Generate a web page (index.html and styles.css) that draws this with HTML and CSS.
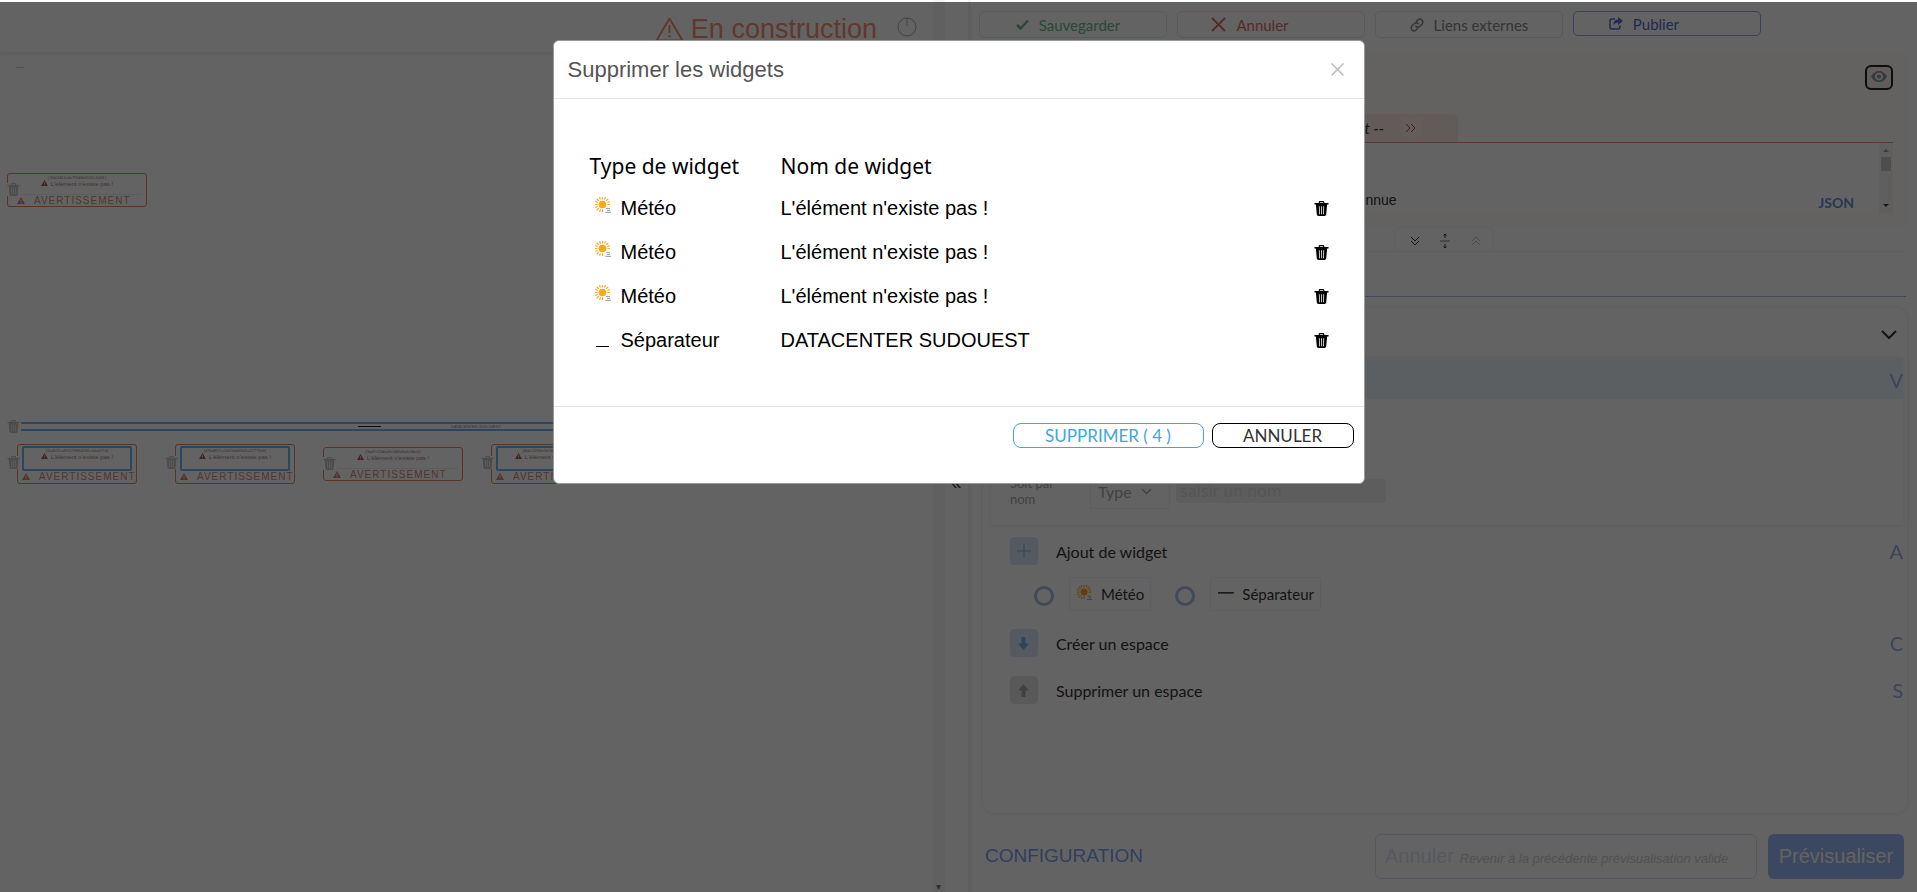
FILE: index.html
```html
<!DOCTYPE html>
<html lang="fr">
<head>
    <meta charset="utf-8" />
    <meta name="viewport" content="width=device-width, initial-scale=1.0" />
    <title>Supprimer les widgets</title>
    <link rel="stylesheet" href="styles.css">
</head>
<body>
    <!-- Shared icons -->
    <svg class="sprite" aria-hidden="true">
        <symbol id="trash" viewBox="0 0 16 16">
            <path fill-rule="evenodd" d="M5 2V1.200Q5 0 6.200 0h3.600Q11 0 11 1.200V2h4.500v1.600H14L13 14.500Q12.800 16 11.500 16h-7Q3.200 16 3 14.500L2 3.600H.5V2zM6.200 2h3.600V1.200H6.200zM5.200 5.500l.3 8.500h.8L6 5.500zm2.400 0V14h.8V5.500zm2.400 0L9.700 14h.8l.3-8.500z" />
        </symbol>
        <symbol id="warn" viewBox="0 0 16 14">
            <path fill-rule="evenodd" d="M8 0l8 14H0zM7 5v4h2V5zm0 5.500v2h2v-2z" />
        </symbol>
        <symbol id="sun" viewBox="0 0 18 18">
            <circle cx="7.500" cy="7.500" r="3.800" fill="#faa71b" />
            <path d="M7.500 0v2.500M7.500 12.500V15M0 7.500h2.500M12.500 7.500H15M1.800 1.800l2 2M11.200 3.800l2-2M1.800 13.200l2-2M4.500.3l1 2.300M10.500.3l-1 2.300M.3 4.500l2.300 1M.3 10.500l2.300-1M4.500 14.700l1-2.300M14.700 4.500l-2.300 1" stroke="#faa71b" stroke-width="1.200" fill="none" />
            <path d="M11 11h4v1.300h-4zM12 13h3v1h-3zM10.500 14.700H16V16h-5.500z" fill="#a9a9a9" />
        </symbol>
        <symbol id="dash" viewBox="0 0 14 14">
            <path d="M0 6.500h13" stroke="#000" fill="none" />
        </symbol>
    </svg>

    <div class="page">
        <main class="board">
            <header class="board-header">
                <h1>
                    <svg width="29" height="25" viewBox="0 0 29 25" fill="none" stroke="currentColor" stroke-width="2" stroke-linejoin="round"><path d="M14.500 1.500L27.500 23.500H1.500zM14.500 8v8M14.500 18v2.500" /></svg>
                    En construction
                </h1>
                <svg class="clock" width="20" height="20" viewBox="0 0 20 20" fill="none" stroke="currentColor"><circle cx="10" cy="10" r="9" /><path d="M10 1v8" /></svg>
            </header>
            <div class="canvas">
                <a class="crumb" href="#">----</a>

                <div class="widget wide">
                    <svg class="trash"><use href="#trash" /></svg>
                    <div class="content">
                        <small>[ 30b2d51a4e7f9d0b6532c1d08 ]</small>
                        <p><svg><use href="#warn" /></svg>L'élément n'existe pas !</p>
                    </div>
                    <div class="alert"><svg><use href="#warn" /></svg>AVERTISSEMENT</div>
                </div>

                <div class="separator">
                    <svg class="trash"><use href="#trash" /></svg>
                    <div class="line"><hr><span>DATACENTER SUDOUEST</span></div>
                </div>

                <div class="widgets">
                    <div class="widget selected">
                        <svg class="trash"><use href="#trash" /></svg>
                        <div class="content">
                            <small>[3ad535cd9147889d266cddad774]</small>
                            <p><svg><use href="#warn" /></svg>L'élément n'existe pas !</p>
                        </div>
                        <div class="alert"><svg><use href="#warn" /></svg>AVERTISSEMENT</div>
                    </div>
                    <div class="widget selected">
                        <svg class="trash"><use href="#trash" /></svg>
                        <div class="content">
                            <small>[d7bd867ca5d2ddd68d5a12776b8]</small>
                            <p><svg><use href="#warn" /></svg>L'élément n'existe pas !</p>
                        </div>
                        <div class="alert"><svg><use href="#warn" /></svg>AVERTISSEMENT</div>
                    </div>
                    <div class="widget wide">
                        <svg class="trash"><use href="#trash" /></svg>
                        <div class="content">
                            <small>[3ad7c55dad1c3d9a8a6c3ba5]</small>
                            <p><svg><use href="#warn" /></svg>L'élément n'existe pas !</p>
                        </div>
                        <div class="alert"><svg><use href="#warn" /></svg>AVERTISSEMENT</div>
                    </div>
                    <div class="widget selected">
                        <svg class="trash"><use href="#trash" /></svg>
                        <div class="content">
                            <small>[f6dc2436fe5b7dacca5d6c11c2]</small>
                            <p><svg><use href="#warn" /></svg>L'élément n'existe pas !</p>
                        </div>
                        <div class="alert"><svg><use href="#warn" /></svg>AVERTISSEMENT</div>
                    </div>
                </div>
            </div>
        </main>

        <div class="scroll"><span>▾</span></div>
        <div class="splitter"><span>«</span></div>

        <aside class="panel">
            <div class="toolbar">
                <button class="save"><svg width="13" height="11" viewBox="0 0 13 11" fill="none" stroke="currentColor" stroke-width="2.500"><path d="M1 6l3.500 3.500L12 1.500" /></svg>Sauvegarder</button>
                <button class="cancel"><svg width="15" height="15" viewBox="0 0 15 15" fill="none" stroke="currentColor" stroke-width="2"><path d="M1 1l13 13M14 1L1 14" /></svg>Annuler</button>
                <button class="links"><svg width="14" height="14" viewBox="0 0 24 24" fill="none" stroke="currentColor" stroke-width="2.500" stroke-linecap="round"><path d="M10 14a5 5 0 0 0 7 0l4-4a5 5 0 0 0-7-7l-3 3M14 10a5 5 0 0 0-7 0l-4 4a5 5 0 0 0 7 7l3-3" /></svg>Liens externes</button>
                <button class="publish"><svg width="14" height="13" viewBox="0 0 14 13"><path d="M6 2H3Q1 2 1 4v6q0 2 2 2h6q2 0 2-2V8.500" fill="none" stroke="currentColor" stroke-width="1.500" /><path d="M9 0l5 4-5 4V5.500Q6 5.500 4.500 8.500 4 3 9 2.500z" fill="currentColor" /></svg>Publier</button>
            </div>

            <section class="status">
                <button class="eye" aria-label="Afficher"><svg width="16" height="11" viewBox="0 0 16 11"><path fill-rule="evenodd" d="M0 5.500Q3 0 8 0t8 5.500Q13 11 8 11T0 5.500zM8 1.500a4 4 0 1 0 .01 0zM8 3.500a2 2 0 1 1-.01 0z" fill="currentColor" /></svg></button>
                <div class="status-tab"><i>Widget --</i><button aria-label="Suivant"><svg width="11" height="10" viewBox="0 0 11 10" fill="none" stroke="currentColor"><path d="M1 1l4 4-4 4M6 1l4 4-4 4" /></svg></button></div>
                <div class="status-body">
                    <span class="unknown">Inconnue</span>
                    <a href="#">JSON</a>
                    <div class="bar"><span class="up"></span><span class="thumb"></span><span class="down"></span></div>
                </div>
            </section>

            <div class="resize">
                <svg width="10" height="10" viewBox="0 0 10 10" fill="none" stroke="currentColor"><path d="M1 1l4 4 4-4M1 5l4 4 4-4" /></svg>
                <svg width="10" height="16" viewBox="0 0 10 16" fill="none" stroke="currentColor"><path d="M0 8h10" stroke="#777" /><path d="M5 1v4M3.500 2.500L5 1l1.500 1.500M5 15v-4M3.500 13.500L5 15l1.500-1.500" /></svg>
                <svg class="off" width="10" height="10" viewBox="0 0 10 10" fill="none" stroke="currentColor"><path d="M1 5l4-4 4 4M1 9l4-4 4 4" /></svg>
            </div>
            <div class="tabs"></div>

            <section class="config">
                <div class="config-head"><svg width="16" height="10" viewBox="0 0 16 10" fill="none" stroke="currentColor" stroke-width="2"><path d="M1 1l7 7 7-7" /></svg></div>
                <div class="config-group">
                    <div class="current"><a href="#">V</a></div>
                    <div class="search">
                        <label for="name">Soit par nom</label>
                        <div class="select">
                            <select aria-label="Type"><option>Type</option></select>
                            <svg width="11" height="7" viewBox="0 0 11 7" fill="none" stroke="currentColor" stroke-width="1.500"><path d="M1 1l4.500 4.500L10 1" /></svg>
                        </div>
                        <input id="name" type="text" placeholder="saisir un nom">
                    </div>
                </div>
                <div class="action">
                    <button class="tile" aria-label="Ajouter"><svg width="14" height="14" viewBox="0 0 14 14" stroke="currentColor"><path d="M7 0v14M0 7h14" /></svg></button>
                    <span>Ajout de widget</span>
                    <a href="#">A</a>
                </div>
                <div class="choices">
                    <input type="radio" name="kind" id="meteo">
                    <label for="meteo"><svg><use href="#sun" /></svg>Météo</label>
                    <input type="radio" name="kind" id="separateur">
                    <label for="separateur"><svg><use href="#dash" /></svg>Séparateur</label>
                </div>
                <div class="action">
                    <button class="tile down" aria-label="Créer"><svg width="11" height="13" viewBox="0 0 11 13" fill="currentColor"><path d="M3.500 0h4v6.500H11L5.500 13 0 6.500h3.500z" /></svg></button>
                    <span>Créer un espace</span>
                    <a href="#">C</a>
                </div>
                <div class="action">
                    <button class="tile up" aria-label="Supprimer"><svg width="11" height="13" viewBox="0 0 11 13" fill="currentColor"><path d="M3.500 13h4V6.500H11L5.500 0 0 6.500h3.500z" /></svg></button>
                    <span>Supprimer un espace</span>
                    <a href="#">S</a>
                </div>
            </section>

            <footer class="panel-footer">
                <span class="title">CONFIGURATION</span>
                <button class="undo">Annuler <i>Revenir à la précédente prévisualisation valide</i></button>
                <button class="preview">Prévisualiser</button>
            </footer>
        </aside>
    </div>

    <div class="backdrop">
        <div class="modal" role="dialog" aria-labelledby="modal-title">
            <div class="modal-header">
                <h2 id="modal-title">Supprimer les widgets</h2>
                <button class="close" aria-label="Fermer"><svg width="13" height="13" viewBox="0 0 13 13" fill="none" stroke="currentColor" stroke-width="1.500"><path d="M.5.5l12 12M12.500.5l-12 12" /></svg></button>
            </div>
            <div class="modal-body">
                <table>
                    <thead>
                        <tr><th>Type de widget</th><th>Nom de widget</th><th></th></tr>
                    </thead>
                    <tbody>
                        <tr>
                            <td><svg class="kind"><use href="#sun" /></svg>Météo</td>
                            <td>L'élément n'existe pas !</td>
                            <td><button aria-label="Supprimer"><svg><use href="#trash" /></svg></button></td>
                        </tr>
                        <tr>
                            <td><svg class="kind"><use href="#sun" /></svg>Météo</td>
                            <td>L'élément n'existe pas !</td>
                            <td><button aria-label="Supprimer"><svg><use href="#trash" /></svg></button></td>
                        </tr>
                        <tr>
                            <td><svg class="kind"><use href="#sun" /></svg>Météo</td>
                            <td>L'élément n'existe pas !</td>
                            <td><button aria-label="Supprimer"><svg><use href="#trash" /></svg></button></td>
                        </tr>
                        <tr>
                            <td><svg class="kind sep" viewBox="0 0 18 18"><path d="M1 14.500h13" stroke="#000" /></svg>Séparateur</td>
                            <td>DATACENTER SUDOUEST</td>
                            <td><button aria-label="Supprimer"><svg><use href="#trash" /></svg></button></td>
                        </tr>
                    </tbody>
                </table>
            </div>
            <div class="modal-footer">
                <button class="confirm">SUPPRIMER ( 4 )</button>
                <button class="dismiss">ANNULER</button>
            </div>
        </div>
    </div>
</body>
</html>
```
FILE: styles.css
```css
* {
    box-sizing: border-box;
}
body {
    margin: 0;
    font-family: "Liberation Sans", Arial, sans-serif;
    color: #333;
    background-color: #fff;
    overflow: hidden;
}
button, select, input {
    font-family: inherit;
    margin: 0;
}
button {
    cursor: pointer;
}
a {
    text-decoration: none;
}
.sprite {
    display: none;
}
.page {
    display: flex;
    height: 100vh;
}

/* Left side */
.board {
    flex: 1;
    min-width: 0;
}
.board-header {
    height: 52px;
    display: flex;
    justify-content: flex-end;
    align-items: flex-end;
    gap: 20px;
    padding: 0 16px 7px 0;
    box-shadow: 0 2px 4px #eee;
}
.board-header h1 {
    margin: 0;
    display: flex;
    align-items: center;
    gap: 7px;
    font-size: 27px;
    line-height: 32px;
    font-weight: normal;
    color: #f59078;
}
.clock {
    color: #aaa;
    margin-bottom: 8px;
}
.canvas {
    padding: 10px 7px;
}
.crumb {
    display: block;
    padding-left: 9px;
    font-size: 6px;
    line-height: 11px;
    color: #66c;
}
.widget {
    position: relative;
    width: 120px;
    height: 40px;
    margin: 0 10px;
    padding: 1px 4px 0;
    border: 1px solid #e08a58;
    border-radius: 3px;
}
.widget.wide {
    width: 140px;
    height: 34px;
    margin: 3px 0;
    padding: 1px 4px 0;
}
.canvas > .widget.wide {
    margin-top: 100px;
}
.trash {
    position: absolute;
    left: -11px;
    top: 11px;
    width: 13px;
    height: 13px;
    fill: #c4c4c4;
    background-color: #fff;
}
.wide .trash {
    left: -1px;
    top: 9px;
}
.content {
    height: 20px;
    border-bottom: 1px solid #eee;
    text-align: center;
    color: #a58080;
}
.selected .content {
    height: 25px;
    border: 2px solid #6fb4f0;
    border-radius: 2px;
    color: #a58080;
}
.content small {
    display: block;
    font-size: 4px;
    line-height: 5px;
}
.content p {
    margin: 0;
    font-size: 6px;
    line-height: 8px;
}
.content svg {
    width: 7px;
    height: 6px;
    margin-right: 3px;
    fill: #b05555;
}
.alert {
    font-size: 10px;
    line-height: 11px;
    letter-spacing: 1px;
    white-space: nowrap;
    color: #d58a78;
}
.alert svg {
    width: 8px;
    height: 7px;
    margin-right: 9px;
    fill: #d5806a;
}
.wide .alert {
    padding-left: 5px;
}
.separator {
    position: relative;
    margin: 215px -7px 13px 14px;
}
.separator .trash {
    left: -14px;
    top: -2px;
}
.line {
    height: 9px;
    display: flex;
    align-items: center;
    border-top: 2px solid #6fb4f0;
    border-bottom: 2px solid #6fb4f0;
    font-size: 4px;
    color: #888;
}
.line hr {
    width: 23px;
    margin: 0 70px 0 337px;
    border: 0;
    border-top: 1px solid #222;
}
.widgets {
    display: grid;
    grid-template-columns: repeat(4, 158px);
}
.scroll {
    width: 12px;
    background-color: #f6f6f6;
    display: flex;
    align-items: flex-end;
    justify-content: center;
    font-size: 10px;
    line-height: 10px;
    color: #777;
}
.splitter {
    width: 26px;
    display: flex;
    justify-content: center;
    padding-top: 473px;
    font-size: 18px;
    line-height: 20px;
    border-right: 3px solid #f4f4f4;
}

/* Right side */
.panel {
    width: 49.350%;
    display: flex;
    flex-direction: column;
    font-family: Lato, "Open Sans", sans-serif;
}
.toolbar {
    display: flex;
    align-items: flex-start;
    gap: 10px;
    height: 52px;
    padding: 11px 8px 0;
}
.toolbar button {
    width: 188px;
    height: 27px;
    display: flex;
    align-items: center;
    justify-content: center;
    gap: 10px;
    padding: 0 10px 0 0;
    background-color: #fff;
    border: 1px solid #e4e4e4;
    border-radius: 5px;
    font-size: 15px;
}
.toolbar .save {
    color: #6fb890;
    border-color: #dcefe9;
}
.toolbar .cancel {
    color: #e07070;
    border-color: #f8dede;
    padding-right: 42px;
}
.toolbar .links {
    color: #888;
    padding: 0;
}
.toolbar .publish {
    height: 25px;
    color: #556cc8;
    border-color: #96a5e6;
    padding-right: 46px;
}
.status {
    margin: 0 11px 0 12px;
    padding: 13px 13px 14px;
    display: flex;
    flex-direction: column;
    background-color: #fffdf6;
}
.eye {
    align-self: flex-end;
    width: 28px;
    height: 25px;
    padding: 0 0 3px;
    display: flex;
    align-items: center;
    justify-content: center;
    background-color: #fdecec;
    border: 2px solid #222;
    border-radius: 6px;
    color: #7f98a5;
}
.status-tab {
    width: 462px;
    height: 28px;
    margin-top: 24px;
    display: flex;
    align-items: center;
    justify-content: flex-end;
    gap: 17px;
    padding-right: 37px;
    background-color: #ffe8e8;
    border-radius: 4px 6px 0 0;
    font-size: 15px;
}
.status-tab button {
    width: 20px;
    height: 20px;
    padding: 0;
    border: 0;
    border-radius: 4px;
    background-color: #fff0ee;
    color: #d04848;
}
.status-body {
    display: flex;
    align-items: flex-end;
    height: 71px;
    background-color: #fff;
    border-top: 1px solid #e89090;
}
.unknown {
    flex: 1;
    padding: 0 0 5px 343px;
    font-family: "Liberation Sans", Arial, sans-serif;
    font-size: 14px;
    line-height: 16px;
}
.status-body a {
    margin-right: 25px;
    font-weight: bold;
    font-size: 14px;
    line-height: 20px;
    color: #6f8ee0;
}
.bar {
    width: 14px;
    height: 70px;
    display: flex;
    flex-direction: column;
    align-items: center;
    padding: 6px 0;
    background-color: #f5f5f5;
}
.bar .up {
    border: 3px solid transparent;
    border-top: 0;
    border-bottom-color: #999;
}
.bar .thumb {
    width: 10px;
    height: 14px;
    margin-top: 5px;
    background-color: #c8c8c8;
}
.bar .down {
    margin-top: auto;
    border: 3px solid transparent;
    border-bottom: 0;
    border-top-color: #444;
}
.resize {
    width: 100px;
    height: 24px;
    margin-left: 423px;
    display: flex;
    align-items: center;
    justify-content: space-between;
    padding: 2px 12px 0 15px;
    border: 1px solid #f5f5f5;
    border-bottom: 0;
    border-radius: 6px 6px 0 0;
}
.resize .off {
    color: #bbb;
}
.tabs {
    height: 46px;
    margin: 0 11px 11px 12px;
    border-top: 1px solid #f5f5f5;
    border-bottom: 1px solid #9db8f5;
}
.config {
    flex: 1;
    margin: 0 10px 0 12px;
    border-radius: 12px;
    box-shadow: 0 0 5px #e4e4e4;
    font-size: 15px;
}
.config-head {
    height: 49px;
    display: flex;
    align-items: center;
    justify-content: flex-end;
    padding: 4px 10px 0;
}
.config-group {
    height: 168px;
    margin: 0 4px 0 8px;
    box-shadow: 0 1px 4px #e8e8e8;
}
.current {
    height: 42px;
    line-height: 46px;
    text-align: right;
    background-color: #ebf5fb;
}
.config a {
    font-size: 20px;
    color: #9bacea;
}
.search {
    display: flex;
    align-items: center;
    padding: 74px 0 0 19px;
    color: #aaa;
}
.search label {
    width: 80px;
    padding-right: 25px;
    font-size: 13px;
    line-height: 16px;
}
.select {
    width: 80px;
    height: 36px;
    display: flex;
    align-items: center;
    padding-left: 4px;
    border: 1px solid #f2f2f2;
}
.select select {
    width: 46px;
    padding: 0 0 0 3px;
    appearance: none;
    border: 0;
    background: none;
    font-size: 16px;
    color: #aaa;
}
.search input {
    width: 210px;
    height: 24px;
    margin-left: 6px;
    padding: 0 4px;
    border: 0;
    border-radius: 4px;
    background-color: #efefef;
    font-family: "Noto Sans", sans-serif;
    font-size: 16px;
}
.search input::placeholder {
    color: #dcdcdc;
}
.action {
    display: flex;
    align-items: center;
    gap: 18px;
    height: 28px;
    margin: 19px 4px 0 27px;
    font-size: 16px;
}
.config-group + .action {
    margin-top: 12px;
}
.action a {
    margin-left: auto;
}
.tile {
    width: 28px;
    height: 28px;
    padding: 0;
    display: flex;
    align-items: center;
    justify-content: center;
    border: 0;
    border-radius: 4px;
    background-color: #d8e6fc;
    color: #85aaf0;
}
.tile.down {
    color: #70b4f0;
}
.tile.up {
    background-color: #e6e6e6;
    color: #a8a8a8;
}
.choices {
    display: flex;
    align-items: center;
    height: 33px;
    margin: 12px 0 0 51px;
}
.choices input {
    appearance: none;
    width: 20px;
    height: 20px;
    margin: 4px 15px 0 0;
    border: 3px solid #a9bde6;
    border-radius: 50%;
}
.choices label {
    height: 34px;
    display: flex;
    align-items: center;
    gap: 7px;
    margin-right: 24px;
    padding: 0 6px 0 7px;
    border: 1px solid #f0f0ff;
    border-radius: 3px;
}
.choices label svg {
    width: 17px;
    height: 17px;
}
.panel-footer {
    display: flex;
    align-items: center;
    height: 79px;
    padding: 7px 13px 0 14px;
    font-family: "Liberation Sans", Arial, sans-serif;
    font-size: 19px;
}
.panel-footer .title {
    color: #829ff0;
}
.panel-footer button {
    height: 45px;
    border-radius: 6px;
    font-size: 20px;
}
.undo {
    width: 382px;
    margin: 0 11px 0 auto;
    padding: 0 9px;
    text-align: left;
    white-space: nowrap;
    background-color: #fff;
    border: 1px solid #e0e0f5;
    color: #e0e4f5;
}
.undo i {
    font-size: 13px;
    color: #d0d0d0;
}
.preview {
    width: 136px;
    padding: 0;
    border: 0;
    background-color: #9cb6f8;
    color: #fff;
}

/* Modal */
.backdrop {
    position: fixed;
    inset: 2px 0 0;
    display: flex;
    justify-content: center;
    align-items: flex-start;
    padding-top: 38px;
    background-color: rgba(0, 0, 0, 0.61);
}
.modal {
    width: 812px;
    background-color: #fff;
    border: 1px solid #999;
    border-radius: 6px;
    color: #000;
}
.modal-header {
    height: 58px;
    display: flex;
    align-items: center;
    justify-content: space-between;
    padding: 0 20px 0 14px;
    border-bottom: 1px solid #e5e5e5;
}
.modal-header h2 {
    margin: 0;
    font-size: 22px;
    font-weight: normal;
    color: #555;
}
.close {
    display: flex;
    padding: 0;
    border: 0;
    background: none;
    color: #bbb;
}
.modal-body {
    padding: 44px 26px 43px 36px;
}
.modal table {
    width: 100%;
    border-collapse: collapse;
    font-size: 20px;
}
.modal th {
    height: 44px;
    padding: 1px 0 0;
    text-align: left;
    font-family: "Noto Sans", sans-serif;
    font-size: 21px;
    line-height: 24px;
    font-weight: normal;
}
.modal th:first-child {
    width: 191px;
}
.modal td {
    height: 44px;
    padding: 0 0 2px;
}
.modal td:last-child {
    width: 24px;
}
.modal td button {
    display: flex;
    padding: 0;
    border: 0;
    background: none;
}
.modal td button svg {
    width: 15px;
    height: 15px;
}
.kind {
    width: 18px;
    height: 18px;
    margin: 0 8px 0 5px;
}
.kind.sep {
    vertical-align: -3px;
}
.modal-footer {
    display: flex;
    justify-content: flex-end;
    gap: 8px;
    padding: 16px 10px 35px;
    border-top: 1px solid #e5e5e5;
}
.modal-footer button {
    height: 25px;
    padding: 0;
    background-color: #fff;
    border: 1px solid #000;
    border-radius: 8px;
    font-family: Lato, "Open Sans", sans-serif;
    font-size: 17px;
    line-height: 23px;
}
.modal-footer .confirm {
    width: 191px;
    color: #3ea6dd;
    border-color: #3ea6dd;
}
.modal-footer .dismiss {
    width: 142px;
    color: #333;
}
```
